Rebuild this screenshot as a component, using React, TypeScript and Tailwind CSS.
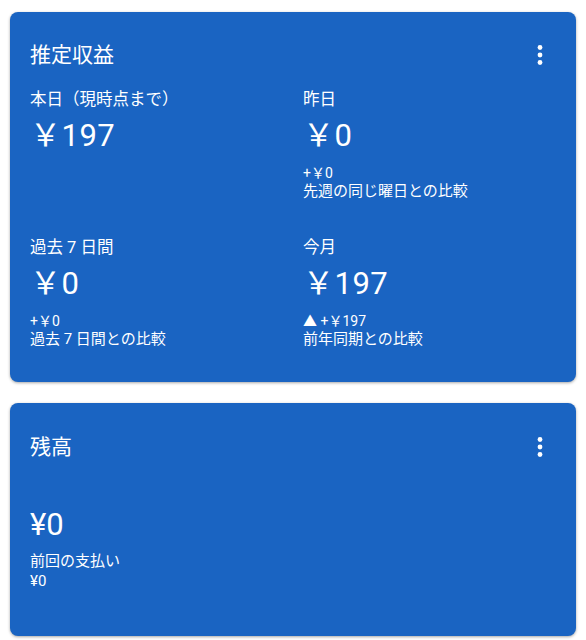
import React from "react";

// ---------------------------
// Icons
// ---------------------------
function MoreIcon() {
  return (
    <svg width="24" height="24" viewBox="0 0 24 24" fill="white">
      <circle cx="12" cy="4.5" r="2.4" />
      <circle cx="12" cy="12" r="2.4" />
      <circle cx="12" cy="19.5" r="2.4" />
    </svg>
  );
}

// ---------------------------
// Pieces
// ---------------------------
type Stat = {
  label: string;
  value: string;
  diff?: string;
  note?: string;
};

function StatBlock({ s }: { s: Stat }) {
  return (
    <div className="flex flex-col">
      <div className="text-[16.5px] leading-[22px]">{s.label}</div>
      <div className="text-[31px] leading-[44px] mt-[3px] tracking-[0.5px]">{s.value}</div>
      {s.diff && <div className="text-[14px] leading-[18px] mt-[6px]">{s.diff}</div>}
      {s.note && <div className="text-[15px] leading-[19px]">{s.note}</div>}
    </div>
  );
}

const stats: Stat[] = [
  { label: "本日（現時点まで）", value: "￥197" },
  { label: "昨日", value: "￥0", diff: "+￥0", note: "先週の同じ曜日との比較" },
  { label: "過去 7 日間", value: "￥0", diff: "+￥0", note: "過去 7 日間との比較" },
  { label: "今月", value: "￥197", diff: "▲ +￥197", note: "前年同期との比較" },
];

export default function App() {
  return (
    <div
      className="w-[586px] h-[640px] bg-white px-[10px] pt-[12px] text-white overflow-hidden"
      style={{ fontFamily: "Roboto, 'Noto Sans CJK JP', sans-serif" }}
    >
      {/* Estimated earnings */}
      <div className="bg-[#1a64c2] rounded-[8px] shadow-[0_1px_3px_rgba(0,0,0,0.35)] h-[370px] pl-[20px] pr-[24px] pt-[29px]">
        <div className="flex items-center justify-between">
          <h2 className="text-[21px] leading-[28px]">推定収益</h2>
          <MoreIcon />
        </div>
        <div className="grid grid-cols-[273px_1fr] gap-y-[36px] mt-[20px]">
          {stats.map((s) => (
            <StatBlock key={s.label} s={s} />
          ))}
        </div>
      </div>

      {/* Balance */}
      <div className="bg-[#1a64c2] rounded-[8px] shadow-[0_1px_3px_rgba(0,0,0,0.35)] h-[233px] mt-[21px] pl-[20px] pr-[24px] pt-[30px]">
        <div className="flex items-center justify-between">
          <h2 className="text-[21px] leading-[28px]">残高</h2>
          <MoreIcon />
        </div>
        <div className="text-[31px] leading-[44px] mt-[42px]">¥0</div>
        <div className="text-[15px] leading-[19px] mt-[5px]">前回の支払い</div>
        <div className="text-[15px] leading-[20px]">¥0</div>
      </div>
    </div>
  );
}
